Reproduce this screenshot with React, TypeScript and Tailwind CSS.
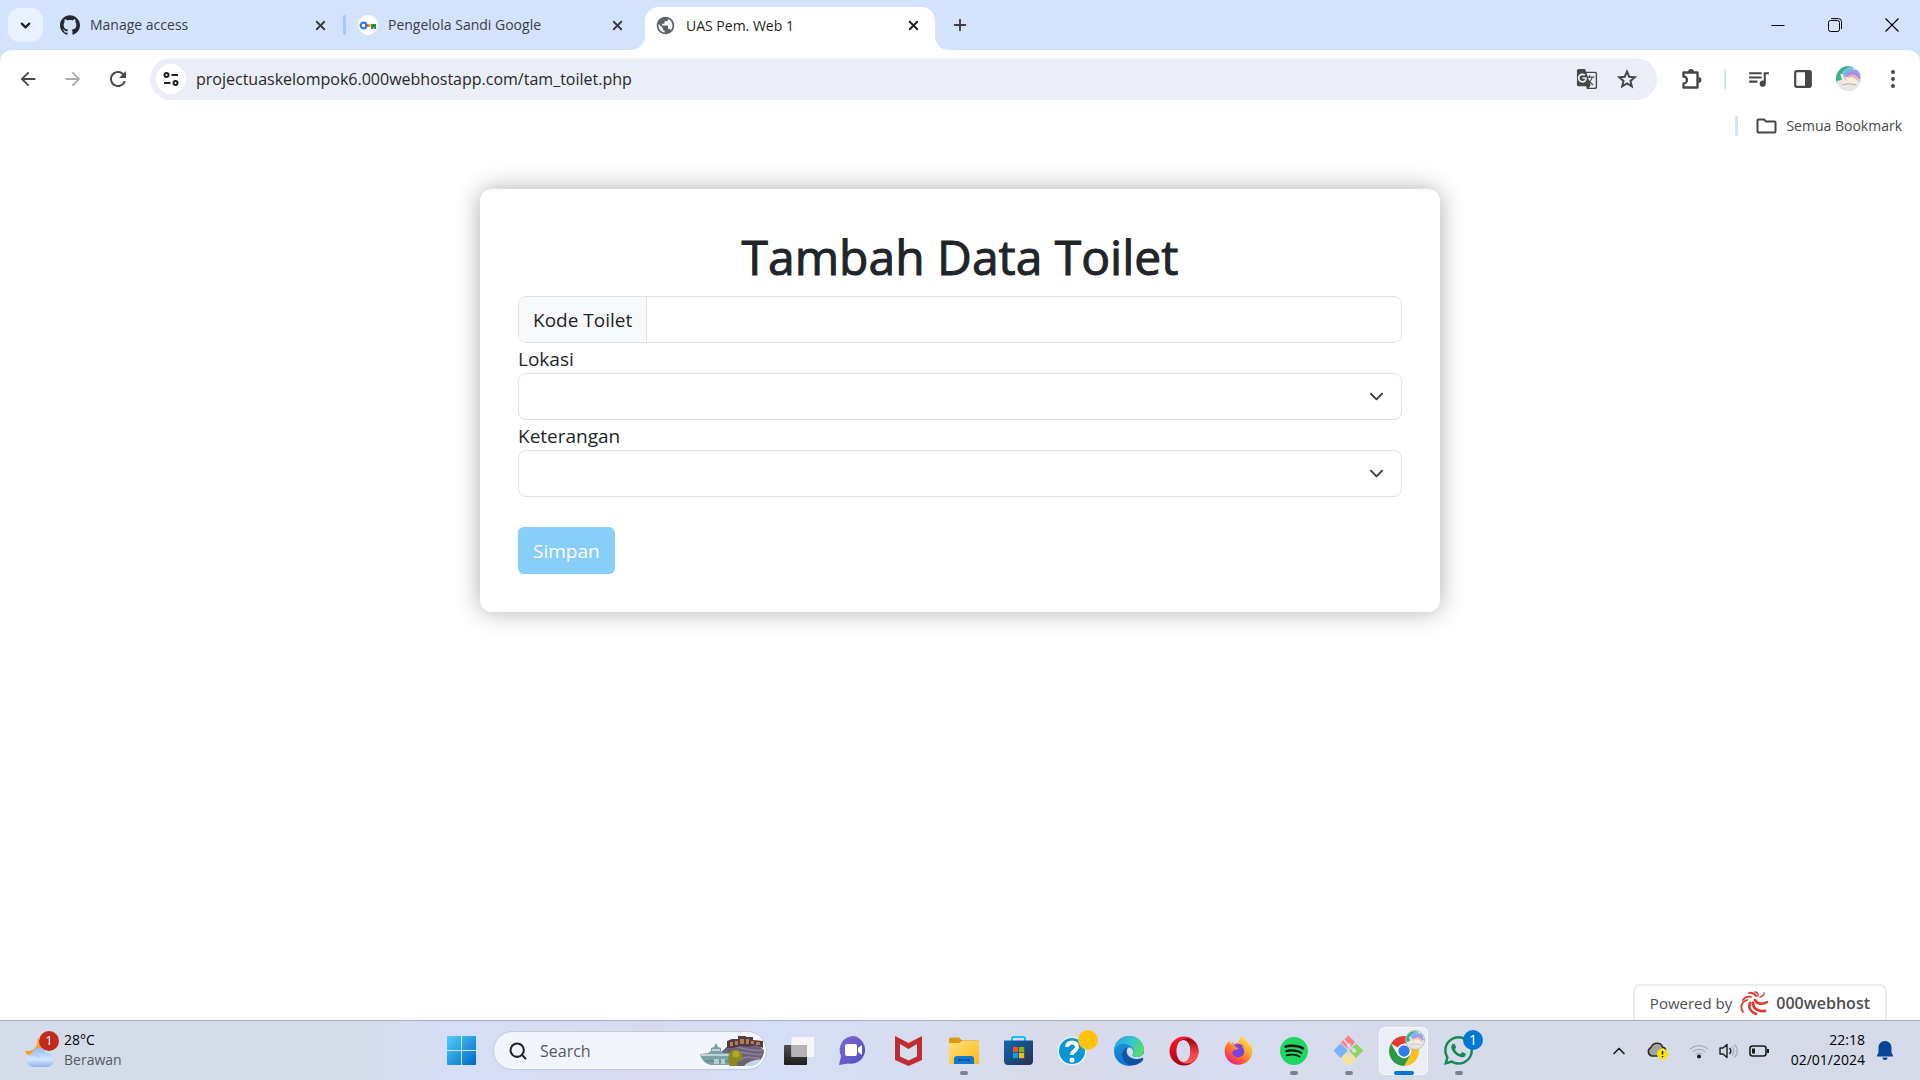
import React, { useState } from "react";
import { MdArrowBack, MdArrowForward, MdGTranslate, MdPublic, MdQueueMusic, MdRefresh } from "react-icons/md";
import { FaFirefoxBrowser, FaWhatsapp } from "react-icons/fa6";
import { SiGithub, SiSpotify } from "react-icons/si";
import { ChevronDown, ChevronUp, Plus, Search, X } from "lucide-react";

/* ---------- Browser ---------- */

function PasswordKeyIcon() {
  return (
    <span className="flex size-5 items-center justify-center rounded-full bg-white">
      <svg viewBox="0 0 20 10" className="w-[18px]" aria-hidden="true">
        <circle cx="5" cy="5" r="3.2" fill="none" stroke="#2a7bf6" strokeWidth="2.4" />
        <path d="M8.6 3.6h3.6v2.8H8.6z" fill="#ea4335" />
        <path d="M10.8 3.6h3.2v2.8h-3.2z" fill="#fbbc04" />
        <path d="M13.4 3.2H19V9h-2V7h-1v2h-2.600z" fill="#1e8e3e" />
      </svg>
    </span>
  );
}

function Tab({ icon, title, width }: { icon: React.ReactNode; title: string; width: string }) {
  return (
    <div className={`flex items-center ${width}`}>
      {icon}
      <span className="ml-2.5 flex-1 truncate text-sm text-[#3c4043]">{title}</span>
      <button aria-label={`Tutup ${title}`} className="text-[#3c3c3c]">
        <X size={15} strokeWidth={3} />
      </button>
    </div>
  );
}

function TabStrip() {
  return (
    <div className="flex h-[50px] items-center bg-[#d3e3fd]">
      <button
        aria-label="Telusuri tab"
        className="ml-2 flex h-[34px] w-[35px] items-center justify-center rounded-xl bg-[#e9f1fe] text-[#1f1f1f]"
      >
        <ChevronDown size={15} strokeWidth={3.5} />
      </button>
      <Tab width="ml-[17px] w-[268px]" title="Manage access" icon={<SiGithub size={20} color="#24292f" />} />
      <span className="ml-[15px] h-5 w-[3px] rounded-full bg-[#a8c7fa]" />
      <Tab width="ml-3 w-[267px]" title="Pengelola Sandi Google" icon={<PasswordKeyIcon />} />
      <div className="relative ml-5 flex h-[43px] w-[290px] items-center self-end rounded-t-[14px] bg-white pr-3.5 pb-1.5 pl-2.5">
        <svg viewBox="0 0 14 14" className="absolute bottom-0 -left-3.5 size-3.5" aria-hidden="true">
          <path d="M0 14A14 14 0 0 0 14 0V14Z" fill="#fff" />
        </svg>
        <svg viewBox="0 0 14 14" className="absolute -right-3.5 bottom-0 size-3.5" aria-hidden="true">
          <path d="M14 14A14 14 0 0 1 0 0V14Z" fill="#fff" />
        </svg>
        <MdPublic size={21} color="#5f6368" />
        <span className="ml-2.5 flex-1 text-sm text-[#1f1f1f]">UAS Pem. Web 1</span>
        <button aria-label="Tutup UAS Pem. Web 1" className="text-[#1f1f1f]">
          <X size={15} strokeWidth={3} />
        </button>
      </div>
      <button aria-label="Tab baru" className="ml-4 text-[#3c3c3c]">
        <Plus size={18} strokeWidth={2.5} />
      </button>
      <div className="ml-auto flex items-center text-black">
        <button aria-label="Minimalkan" className="flex w-[57px] justify-center">
          <svg viewBox="0 0 14 14" className="size-3.5" aria-hidden="true">
            <path d="M0.500 7.500H13.500" stroke="currentColor" />
          </svg>
        </button>
        <button aria-label="Pulihkan" className="flex w-[57px] justify-center">
          <svg viewBox="0 0 14 14" className="size-3.5" fill="none" stroke="currentColor" aria-hidden="true">
            <rect x="0.500" y="2.500" width="11" height="11" rx="2" />
            <path d="M3 .6H10.500A3 3 0 0 1 13.500 3.600V11" />
          </svg>
        </button>
        <button aria-label="Tutup" className="flex w-[57px] justify-center">
          <svg viewBox="0 0 14 14" className="size-3.5" stroke="currentColor" strokeWidth="1.200" aria-hidden="true">
            <path d="M.5 .5 13.500 13.500M13.500 .5 .5 13.500" />
          </svg>
        </button>
      </div>
    </div>
  );
}

function Avatar({ className }: { className: string }) {
  return (
    <svg viewBox="0 0 24 24" className={className} aria-hidden="true">
      <clipPath id="avatar-clip">
        <circle cx="12" cy="12" r="12" />
      </clipPath>
      <g clipPath="url(#avatar-clip)">
        <rect width="24" height="24" fill="#e4e2df" />
        <g fill="none">
          <path d="M2 16C1 9 5 2 12 -1" stroke="#35b38c" strokeWidth="7" />
          <path d="M6 12C6 7 10 3 16 1" stroke="#6cc9dd" strokeWidth="3" />
          <path d="M8 10C11 4 18 3 24 8" stroke="#8ea6ee" strokeWidth="3.500" />
          <path d="M10 10C13 6 19 6 23 12" stroke="#a98be4" strokeWidth="2.500" />
          <path d="M12 11C14 8 19 9 22 15" stroke="#f0b3b4" strokeWidth="2.500" />
        </g>
        <path d="M0 15C7 12 16 12 24 15V24H0Z" fill="#e6e6e6" />
        <path d="M4 8c3-1 4 1 5 4 4-1 7-1 10 1l2 4-4 1-8 1-4-1 2-3z" fill="#f6eedf" />
        <path d="M6 18l6-1 7 1M7 9l3 5" stroke="#b5a58f" strokeWidth=".9" fill="none" />
      </g>
    </svg>
  );
}

function Toolbar() {
  return (
    <div className="bg-[#d3e3fd]">
      <div className="flex h-[57px] items-center rounded-t-xl bg-white pr-[18px] text-[#474747]">
        <div className="flex w-[150px] items-center pl-[5px]">
          <button aria-label="Kembali" className="flex w-[45px] justify-center">
            <MdArrowBack size={22} />
          </button>
          <button aria-label="Maju" className="flex w-[45px] justify-center text-[#aaaaaa]">
            <MdArrowForward size={22} />
          </button>
          <button aria-label="Muat ulang" className="flex w-[45px] justify-center">
            <MdRefresh size={24} />
          </button>
        </div>
        <div className="flex h-[42px] flex-1 items-center rounded-full bg-[#ebeef7] pr-[19px] pl-1.5">
          <button
            aria-label="Lihat informasi situs"
            className="flex size-[30px] items-center justify-center rounded-full bg-white text-[#1f1f1f]"
          >
            <svg viewBox="0 0 16 14" className="w-4" fill="none" stroke="currentColor" strokeWidth="2" aria-hidden="true">
              <circle cx="3.500" cy="3" r="2" />
              <path d="M8.500 3H15M1 11H7.500" />
              <circle cx="12.500" cy="11" r="2" />
            </svg>
          </button>
          <input
            aria-label="Bilah alamat dan penelusuran"
            className="ml-2.5 flex-1 bg-transparent text-base text-[#28282a] outline-none"
            defaultValue="projectuaskelompok6.000webhostapp.com/tam_toilet.php"
          />
          <button aria-label="Terjemahkan halaman ini" className="mr-[18px]">
            <MdGTranslate size={22} />
          </button>
          <button aria-label="Bookmark tab ini">
            <svg viewBox="0 0 22 22" className="size-[22px]" fill="none" stroke="currentColor" strokeWidth="2" aria-hidden="true">
              <path d="M11 3.500L13.200 8.700L18.800 9.200L14.500 12.900L15.800 18.400L11 15.500L6.200 18.400L7.500 12.900L3.200 9.200L8.800 8.700Z" />
            </svg>
          </button>
        </div>
        <div className="flex items-center pl-6">
          <button aria-label="Ekstensi">
            <svg viewBox="0 0 22 22" className="size-[22px]" aria-hidden="true">
              <path
                d="M2.500 4.500H16.500V19.500H2.500V15.500A3.500 3.500 0 0 0 2.500 8.500Z"
                fill="none"
                stroke="currentColor"
                strokeWidth="2.400"
                strokeLinejoin="round"
              />
              <path d="M7 4A3 3 0 0 1 13 4ZM17.500 9A3 3 0 0 1 17.500 15Z" fill="currentColor" />
            </svg>
          </button>
          <span className="ml-[21px] h-5 w-0.5 bg-[#d3e3fd]" />
          <button aria-label="Kontrol media" className="ml-5">
            <MdQueueMusic size={25} />
          </button>
          <button aria-label="Panel samping" className="ml-[23px]">
            <svg viewBox="0 0 18 18" className="size-[18px]" aria-hidden="true">
              <rect x="1.200" y="1.200" width="15.600" height="15.600" rx="1.500" fill="none" stroke="currentColor" strokeWidth="2.200" />
              <path d="M11 1h6v16h-6z" fill="currentColor" />
            </svg>
          </button>
          <button aria-label="Profil" className="ml-6">
            <Avatar className="size-[25px]" />
          </button>
          <button aria-label="Menu" className="ml-[23px] w-[18px]">
            <svg viewBox="0 0 18 18" className="size-[18px]" fill="currentColor" aria-hidden="true">
              <circle cx="9" cy="2" r="2" />
              <circle cx="9" cy="9" r="2" />
              <circle cx="9" cy="16" r="2" />
            </svg>
          </button>
        </div>
      </div>
    </div>
  );
}

function BookmarkBar() {
  return (
    <div className="flex h-[37px] items-center justify-end bg-white pr-[18px] text-[#474747]">
      <span className="h-5 w-[3px] rounded-full bg-[#d3e3fd]" />
      <button className="ml-[18px] flex items-center gap-[9px] text-sm">
        <svg viewBox="0 0 21 16" className="w-[21px]" fill="none" stroke="currentColor" strokeWidth="2" aria-hidden="true">
          <path d="M1.500 2.500a1 1 0 0 1 1-1H8l2 2h8.500a1 1 0 0 1 1 1v9a1 1 0 0 1-1 1h-16a1 1 0 0 1-1-1z" />
        </svg>
        Semua Bookmark
      </button>
    </div>
  );
}

/* ---------- Page ---------- */

function SelectField({ id, label }: { id: string; label: string }) {
  return (
    <div>
      <label htmlFor={id} className="block h-[30px] leading-8">
        {label}
      </label>
      <div className="relative">
        <select
          id={id}
          defaultValue=""
          className="block h-[47px] w-full appearance-none rounded-lg border border-[#dee2e6] bg-white px-4"
        >
          <option value=""></option>
        </select>
        <svg
          viewBox="0 0 16 16"
          className="pointer-events-none absolute top-4 right-[18px] size-[15px]"
          fill="none"
          stroke="#343a40"
          strokeWidth="2"
          strokeLinecap="round"
          strokeLinejoin="round"
          aria-hidden="true"
        >
          <path d="m2 5 6 6 6-6" />
        </svg>
      </div>
    </div>
  );
}

function ToiletForm() {
  const [code, setCode] = useState("");
  return (
    <form
      onSubmit={(e) => e.preventDefault()}
      className="mx-auto w-1/2 rounded-xl bg-white p-[38px] text-[19px] text-[#212529] shadow-[0_0_25px_rgba(0,0,0,0.32)]"
    >
      <h1 className="mb-[9px] text-center text-[48px] leading-[60px] [-webkit-text-stroke:1px_#212529]">
        Tambah Data Toilet
      </h1>
      <div className="flex h-[47px] overflow-hidden rounded-lg border border-[#dee2e6]">
        <label htmlFor="kode" className="flex items-center border-r border-[#dee2e6] bg-[#f8f9fa] px-3.5 pt-0.5">
          Kode Toilet
        </label>
        <input
          id="kode"
          value={code}
          onChange={(e) => setCode(e.target.value)}
          className="min-w-0 flex-1 px-4 outline-none"
        />
      </div>
      <SelectField id="lokasi" label="Lokasi" />
      <SelectField id="keterangan" label="Keterangan" />
      <button type="submit" className="mt-[30px] h-[47px] rounded-md bg-[#87cefa] px-[15px] pt-0.5 text-white">
        Simpan
      </button>
    </form>
  );
}

function HostBadge() {
  return (
    <a
      href="#"
      className="mt-auto mr-[33px] flex h-9 items-center self-end rounded-t-lg border-2 border-b-0 border-[#ececec] bg-white px-[15px] text-[15px] text-[#4f4f4f]"
    >
      Powered by
      <svg viewBox="0 0 28 24" className="mx-2 w-7" fill="none" stroke="#e0352b" strokeLinecap="round" aria-hidden="true">
        <path d="M27 11C22 14 17 13 15 9" strokeWidth="2.600" />
        <path d="M25 20C19 21 13 18 13 12" strokeWidth="2.800" />
        <path d="M16 23C11 21 8 17 10 12" strokeWidth="2.600" />
        <path d="M3 21C0 17 1 11 7 9" strokeWidth="1.800" />
        <path d="M3 9C5 6 8 5 11 6" strokeWidth="1.800" />
        <path d="M9 2C12 1 15 3 16 5" strokeWidth="1.800" />
        <path d="M15 1C17 1 18 3 18 5M24 2C24 4 22 6 20 6" strokeWidth="1.500" />
      </svg>
      <span className="text-base font-semibold">000webhost</span>
    </a>
  );
}

/* ---------- Taskbar ---------- */

function TaskButton({
  label,
  running,
  active,
  children,
}: {
  label: string;
  running?: boolean;
  active?: boolean;
  children: React.ReactNode;
}) {
  return (
    <button
      aria-label={label}
      className={`relative mx-[3px] flex h-12 w-[49px] items-center justify-center rounded-md ${
        active ? "border border-white/60 bg-[#eceef6]" : ""
      }`}
    >
      {children}
      {running && <span className="absolute bottom-0 h-1 w-2 rounded-full bg-[#7d8189]" />}
      {active && <span className="absolute -bottom-px h-1 w-5 rounded-full bg-[#0078d4]" />}
    </button>
  );
}

function Gradients() {
  return (
    <svg width="0" height="0" className="absolute" aria-hidden="true">
      <defs>
        <linearGradient id="g-win" x1="0" y1="0" x2="1" y2="1">
          <stop offset="0" stopColor="#4fd0fb" />
          <stop offset="1" stopColor="#0067c8" />
        </linearGradient>
        <linearGradient id="g-edge-top" x1="0" y1="0.300" x2="1" y2="0.700">
          <stop offset="0" stopColor="#27a5de" />
          <stop offset="0.500" stopColor="#35c5cf" />
          <stop offset="1" stopColor="#66df5a" />
        </linearGradient>
        <linearGradient id="g-edge-body" x1="0.200" y1="0" x2="0.500" y2="1">
          <stop offset="0" stopColor="#1c9ae0" />
          <stop offset="1" stopColor="#0a6fd0" />
        </linearGradient>
        <linearGradient id="g-opera" x1="0" y1="0" x2="0" y2="1">
          <stop offset="0" stopColor="#ff1b2d" />
          <stop offset="1" stopColor="#a70014" />
        </linearGradient>
        <linearGradient id="g-opera-side" x1="0" y1="0" x2="0" y2="1">
          <stop offset="0" stopColor="#8f0a12" />
          <stop offset="0.700" stopColor="#ff4b4b" />
          <stop offset="1" stopColor="#ff5a5a" />
        </linearGradient>
        <linearGradient id="g-fox" x1="0.900" y1="0" x2="0.200" y2="1">
          <stop offset="0" stopColor="#fff44f" />
          <stop offset="0.350" stopColor="#ffb32e" />
          <stop offset="0.650" stopColor="#ff6a2f" />
          <stop offset="1" stopColor="#e31587" />
        </linearGradient>
        <linearGradient id="g-chat" x1="0" y1="0" x2="1" y2="1">
          <stop offset="0" stopColor="#7b6bc9" />
          <stop offset="0.500" stopColor="#6a5cc8" />
          <stop offset="1" stopColor="#4a4fc0" />
        </linearGradient>
        <linearGradient id="g-folder" x1="0" y1="0" x2="1" y2="1">
          <stop offset="0" stopColor="#ffe07a" />
          <stop offset="1" stopColor="#fbb917" />
        </linearGradient>
        <linearGradient id="g-store" x1="0" y1="0" x2="1" y2="1">
          <stop offset="0" stopColor="#0d68b8" />
          <stop offset="1" stopColor="#28304f" />
        </linearGradient>
        <linearGradient id="g-cloud" x1="0" y1="0" x2="0" y2="1">
          <stop offset="0" stopColor="#8fbcf5" />
          <stop offset="0.600" stopColor="#d4e5fb" />
          <stop offset="1" stopColor="#8eb4ee" />
        </linearGradient>
        <linearGradient id="g-dark" x1="0" y1="0" x2="0" y2="1">
          <stop offset="0" stopColor="#505050" />
          <stop offset="1" stopColor="#1d1d1d" />
        </linearGradient>
      </defs>
    </svg>
  );
}

function SearchArt() {
  return (
    <svg viewBox="0 0 64 30" className="h-[30px] w-16" aria-hidden="true">
      <path d="M19 18C24 14 27 9 32 9H58L64 14C64 22 58 29 50 30H30Z" fill="#6c6179" />
      <path d="M34 11C44 12 54 16 63 14M36 17C44 14 54 21 62 18M42 23C48 18 54 24 60 22" stroke="#8d8098" strokeWidth="1.600" fill="none" />
      <path d="M44 30C48 25 56 24 61 23C58 28 54 30 50 30Z" fill="#c5d3ea" />
      <path d="M27 12V5L32 3H38V0H46V1H53V4L63 5V12L56 9L48 11L40 10L34 12Z" fill="#503b48" />
      <path d="M30 6h3v4h-3zM35 5h3v4h-3zM40 3h4v5h-4zM46 3h3v5h-3zM51 5h3v3h-3zM56 6h4v3h-4z" fill="#b97a48" />
      <path d="M0 18L8 17L11 15V12L14 11L16 7L18 11L21 12V15L24 17H30V29H11C6 28 1 24 0 18Z" fill="#7d9faa" />
      <path d="M1 19H30M12 14H20" stroke="#d4e4e6" strokeWidth="1.500" />
      <path d="M5 25H29" stroke="#567985" />
      <path d="M14 23h5v5h-5zM21 23h4v5h-4z" fill="#b5ccd0" />
      <path d="M29 28C26 18 31 14 36 14C42 15 44 20 41 25L37 26V30H31Z" fill="#8b8a1f" />
      <circle cx="36" cy="18" r="3.500" fill="#b0a82a" />
    </svg>
  );
}

function Taskbar() {
  return (
    <footer className="grid h-[60px] grid-cols-[1fr_auto_1fr] items-center border-t border-[#a9afbb] bg-[linear-gradient(90deg,#d5dce9_0%,#d4dbe8_18%,#d6def6_24%,#d9daef_34%,#d5dff6_40%,#d8dae9_55%,#d6dbf0_65%,#d6dbe8_78%,#d4dae7_100%)]">
      <Gradients />
      <button className="flex items-center pl-6 text-left">
        <span className="relative">
          <svg viewBox="0 0 32 36" className="h-9 w-8" aria-hidden="true">
            <path d="M13 5C15 12 11 19 1 18C3 25 16 25 18 15C18 10 16 7 13 5Z" fill="#f7a01f" />
            <path d="M8 34A7 7 0 0 1 8 20.500C10 13 20 13 22 20A7 7 0 1 1 24 34Z" fill="url(#g-cloud)" />
            <path d="M7 22C11 20 14 22 15 25" stroke="#aecdf8" strokeWidth="2" fill="none" />
          </svg>
          <span className="absolute -top-0.5 left-[15px] flex size-5 items-center justify-center rounded-full bg-[#c42b1c] text-[13px] leading-none text-white">
            1
          </span>
        </span>
        <span className="ml-2 pb-0.5 text-sm leading-5">
          <span className="block text-black">28°C</span>
          <span className="block text-[#56595f]">Berawan</span>
        </span>
      </button>

      <div className="flex items-center">
        <TaskButton label="Start">
          <svg viewBox="0 0 29 29" className="size-[29px]" fill="url(#g-win)" aria-hidden="true">
            <path d="M1 0H14V14H0V1A1 1 0 0 1 1 0ZM15 0H28A1 1 0 0 1 29 1V14H15ZM0 15H14V29H1A1 1 0 0 1 0 28ZM15 15H29V28A1 1 0 0 1 28 29H15Z" />
          </svg>
        </TaskButton>
        <label className="mx-1 flex h-[39px] w-[274px] items-center rounded-full border border-[#c3c9dc] bg-[#f2f5fc] pr-0.5 pl-3.5">
          <Search size={20} strokeWidth={2.5} color="#222222" />
          <input
            aria-label="Search"
            placeholder="Search"
            className="ml-3 w-0 flex-1 bg-transparent text-base outline-none placeholder:text-[#56585e]"
          />
          <SearchArt />
        </label>
        <TaskButton label="Task view">
          <svg viewBox="0 0 30 28" className="w-[30px]" aria-hidden="true">
            <rect x="0" y="8" width="23" height="20" rx="1" fill="url(#g-dark)" />
            <rect x="7.500" y="0" width="22.500" height="20" rx="1" fill="#f6f6f6" />
            <path d="M7.500 8H23V20H7.500Z" fill="#b4b4b4" />
          </svg>
        </TaskButton>
        <TaskButton label="Chat">
          <svg viewBox="0 0 29 29" className="size-[29px]" aria-hidden="true">
            <path d="M15 0A14 14 0 1 1 9 27.500L0 29L2 20A14 14 0 0 1 15 0Z" fill="url(#g-chat)" />
            <rect x="6" y="8" width="12" height="12" rx="2" fill="#fff" />
            <path d="M19 12L23 9V19L19 16Z" fill="#fff" />
          </svg>
        </TaskButton>
        <TaskButton label="McAfee">
          <svg viewBox="0 0 27 30" className="w-[27px]" aria-hidden="true">
            <path d="M0 0L13.500 7L27 0V24L13.500 30L0 24ZM5 8V20.500L13.500 24.500L22 20.500V8L13.500 13Z" fill="#c02c2f" />
          </svg>
        </TaskButton>
        <TaskButton label="File Explorer" running>
          <svg viewBox="0 0 30 27" className="w-[30px]" aria-hidden="true">
            <path d="M0 2A1.500 1.500 0 0 1 1.500 .5H10L13 3.500H29A1 1 0 0 1 30 4.500V10H0Z" fill="#dd9b0c" />
            <path d="M0 6H10L13 4H30V27H0Z" fill="url(#g-folder)" />
            <path d="M5 27V22A3 3 0 0 1 8 19H22A3 3 0 0 1 25 22V27Z" fill="#0f78d0" />
            <path d="M9 23H21" stroke="#074f93" strokeWidth="1.500" />
          </svg>
        </TaskButton>
        <TaskButton label="Microsoft Store">
          <svg viewBox="0 0 29 29" className="size-[29px]" aria-hidden="true">
            <path d="M8 6V2.500A1.500 1.500 0 0 1 9.500 1H19.500A1.500 1.500 0 0 1 21 2.500V6" fill="none" stroke="#20b8f5" strokeWidth="2" />
            <path d="M0 4.500H29V25A4 4 0 0 1 25 29H4A4 4 0 0 1 0 25Z" fill="url(#g-store)" />
            <path d="M9 11h5.200v5.200H9z" fill="#f25022" />
            <path d="M15 11h5.200v5.200H15z" fill="#7fba00" />
            <path d="M9 17h5.200v5.200H9z" fill="#00a4ef" />
            <path d="M15 17h5.200v5.200H15z" fill="#ffb900" />
          </svg>
        </TaskButton>
        <TaskButton label="Bantuan">
          <svg viewBox="0 0 30 30" className="mr-1 size-[30px]" aria-hidden="true">
            <circle cx="15" cy="15" r="14.500" fill="#e8f5fb" />
            <circle cx="15" cy="15" r="13" fill="#0a96d4" />
            <path d="M10 11C10 5 20 5 20 11C20 15 15 14.500 15 19" fill="none" stroke="#fff" strokeWidth="4" />
            <circle cx="15" cy="24" r="2.500" fill="#fff" />
          </svg>
          <span className="absolute top-[3px] right-0 size-5 rounded-full bg-[#ffc20e]" />
        </TaskButton>
        <TaskButton label="Microsoft Edge">
          <svg viewBox="0 0 30 30" className="size-[30px]" aria-hidden="true">
            <circle cx="15" cy="15" r="15" fill="url(#g-edge-body)" />
            <path
              d="M0 15C0 6 7 0 15 0C24 0 30 6 30 13.500C30 18 27 21 22 21C19 21 18 20 18.500 18.500C19.500 17.500 20 16 19.500 14C18 9 12 7.500 8 8C4 8.500 1 11 0 15Z"
              fill="url(#g-edge-top)"
            />
            <path
              d="M13.500 11.500C8 13 7 19 9.500 23.500C12 28 18 31 24 28C28 26 30 24 29 21.500C24 25 15 24 13 18.500C12 16 12.500 13 13.500 11.500Z"
              fill="#12529b"
            />
            <path
              d="M13.500 12.500C12 15 13 18.500 15.500 20.500C19 23.500 25 23.500 29 21.500L31 23V16C28 20 25 21.500 22 21C19 21 18 20 18.500 18.500C20 17 19.500 13 17 12C15.500 11.200 14.200 11.500 13.500 12.500Z"
              fill="#d8dbed"
            />
          </svg>
        </TaskButton>
        <TaskButton label="Opera">
          <svg viewBox="0 0 30 30" className="size-[30px]" aria-hidden="true">
            <path
              fillRule="evenodd"
              d="M15 .5A14.500 14.500 0 1 1 15 29.500A14.500 14.500 0 0 1 15 .5ZM14.500 4C10 4 7.500 9 7.500 15S10 26 14.500 26S21.500 21 21.500 15S19 4 14.500 4Z"
              fill="url(#g-opera)"
            />
            <path d="M11 5C18 -1 29.500 4 29.500 15S18 31 11 25C18 28.500 21.500 21 21.500 15S18 1.500 11 5Z" fill="url(#g-opera-side)" />
          </svg>
        </TaskButton>
        <TaskButton label="Firefox">
          <span className="absolute size-4 rounded-full bg-[#7542e5]" />
          <FaFirefoxBrowser size={29} fill="url(#g-fox)" className="relative" />
        </TaskButton>
        <TaskButton label="Spotify" running>
          <span className="absolute size-6 rounded-full bg-[#101010]" />
          <SiSpotify size={28} color="#1ed760" className="relative" />
        </TaskButton>
        <TaskButton label="Git" running>
          <svg viewBox="0 0 31 31" className="size-[31px]" aria-hidden="true">
            <path d="M15.500 .5L22 7L15.500 15L8 7.500Z" fill="#ff7f7f" />
            <path d="M23 8.500L30.500 15.500L23 23L16 15.500Z" fill="#8fd460" />
            <path d="M15.500 16.500L22.500 23.500L15.500 30.500L8.500 23.500Z" fill="#ffe07f" />
            <path d="M7.500 8.500L15 15.500L7.500 23L.5 15.500Z" fill="#7fb0ff" />
            <path d="M11 5L15.500 10V22M15.500 10L21 15.500" fill="none" stroke="#d9dcec" strokeWidth="1.800" />
            <circle cx="15.500" cy="10" r="2" fill="#d9dcec" />
            <circle cx="21" cy="15.500" r="2.200" fill="#d9dcec" />
            <circle cx="15.500" cy="22" r="2.200" fill="#d9dcec" />
          </svg>
        </TaskButton>
        <TaskButton label="Google Chrome" active>
          <svg viewBox="0 0 30 30" className="size-[30px]" aria-hidden="true">
            <path d="M15 15L2.010 7.500A15 15 0 0 1 27.990 7.500L15 7.500Z" fill="#e33b2e" />
            <path d="M15 7.500H27.990A15 15 0 0 1 15 30L21.500 18.700Z" fill="#fcc21b" />
            <path d="M2.010 7.500L8.500 18.700L15 22.500L21.500 18.700L15 30A15 15 0 0 1 2.010 7.500Z" fill="#2a9a46" />
            <circle cx="15" cy="15" r="7.200" fill="#fff" />
            <circle cx="15" cy="15" r="5.700" fill="#2f7de9" />
          </svg>
          <span className="absolute top-0.5 right-0.5 rounded-full border border-[#b5b8bd]">
            <Avatar className="size-[18px]" />
          </span>
        </TaskButton>
        <TaskButton label="WhatsApp" running>
          <FaWhatsapp size={33} color="#138a55" />
          <span className="absolute top-[3px] right-0 flex size-5 items-center justify-center rounded-full bg-[#0078d4] text-sm leading-none text-white">
            1
          </span>
        </TaskButton>
      </div>

      <div className="flex items-center justify-end pr-[27px] text-[#1b1b1b]">
        <button aria-label="Tampilkan ikon tersembunyi">
          <ChevronUp size={20} strokeWidth={2} />
        </button>
        <button aria-label="OneDrive" className="ml-[18px]">
          <svg viewBox="0 0 22 18" className="w-[22px]" aria-hidden="true">
            <path d="M5 14A4.500 4.500 0 0 1 4 5.500C6 0 14 0 15.500 5C19 6 19 8 18 9L12 14Z" fill="#a3a3a3" stroke="#2b2b2b" strokeWidth="1.600" />
            <circle cx="15.500" cy="12" r="5.500" fill="#fde100" />
            <path d="M15.500 9V12.500M15.500 14V15.300" stroke="#222" strokeWidth="1.500" />
          </svg>
        </button>
        <button aria-label="Wi-Fi" className="ml-5">
          <svg viewBox="0 0 20 16" className="w-5" fill="none" stroke="#a9adb7" strokeWidth="1.300" aria-hidden="true">
            <path d="M1 6.500A12.500 12.500 0 0 1 19 6.500M3.700 9A9 9 0 0 1 16.300 9M6.500 11.500A5 5 0 0 1 13.500 11.500" />
            <circle cx="10" cy="13.500" r="2" fill="#1b1b1b" stroke="none" />
          </svg>
        </button>
        <button aria-label="Volume" className="ml-2.5">
          <svg viewBox="0 0 20 16" className="w-5" fill="none" stroke="currentColor" strokeWidth="1.400" strokeLinejoin="round" aria-hidden="true">
            <path d="M1 5H4L8 1.500V14.500L4 11H1Z" />
            <path d="M10.500 5A4.500 4.500 0 0 1 10.500 11" />
            <path d="M13 3.500A6.500 6.500 0 0 1 13 12.500M15.500 1.500A9 9 0 0 1 15.500 14.500" stroke="#a9adb7" />
          </svg>
        </button>
        <button aria-label="Baterai" className="ml-2.5">
          <svg viewBox="0 0 20 12" className="w-5" fill="none" stroke="currentColor" strokeWidth="1.600" aria-hidden="true">
            <rect x="1" y="1" width="16" height="10" rx="2.500" />
            <path d="M3 3.500H6V8.500H3Z" fill="currentColor" stroke="none" />
            <path d="M19 4V8" strokeWidth="2" />
          </svg>
        </button>
        <button className="ml-[22px] pb-0.5 text-right text-sm leading-5 text-black">
          <span className="block">22:18</span>
          <span className="block">02/01/2024</span>
        </button>
        <button aria-label="Notifikasi" className="ml-3">
          <svg viewBox="0 0 16 19" className="w-4" fill="#0a4595" aria-hidden="true">
            <path d="M8 0C12 0 14.500 3 14.500 6.500V11.500L16 14.500V15.500H0V14.500L1.500 11.500V6.500C1.500 3 4 0 8 0ZM5.500 16.500H10.500A2.500 2.500 0 0 1 5.500 16.500Z" />
          </svg>
        </button>
      </div>
    </footer>
  );
}

export default function App() {
  return (
    <div className="flex min-h-screen flex-col bg-white font-['Open_Sans','Noto_Sans',sans-serif]">
      <header>
        <TabStrip />
        <Toolbar />
        <BookmarkBar />
      </header>
      <main className="flex flex-1 flex-col pt-[45px]">
        <ToiletForm />
        <HostBadge />
      </main>
      <Taskbar />
    </div>
  );
}
